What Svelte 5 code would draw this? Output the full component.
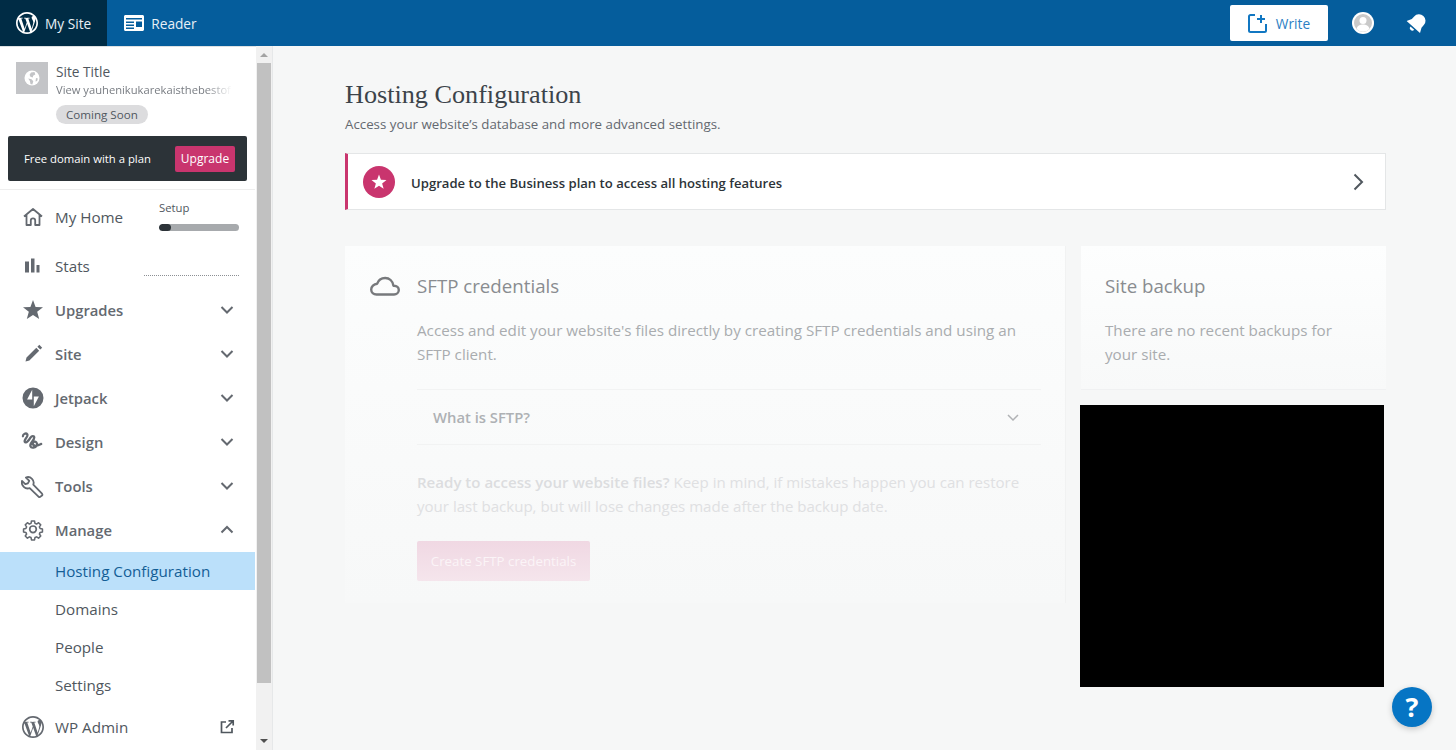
<script>
	const wp =
		'M12 2C6.477 2 2 6.477 2 12s4.477 10 10 10 10-4.477 10-10S17.523 2 12 2zM3.5 12c0-1.232.264-2.402.736-3.459L8.291 19.65C5.455 18.272 3.5 15.365 3.5 12zm8.5 8.501c-.834 0-1.64-.122-2.401-.346l2.55-7.41 2.613 7.158c.017.042.038.081.061.117-.884.31-1.833.481-2.823.481zm1.172-12.486c.512-.027.973-.081.973-.081.458-.054.404-.727-.054-.701 0 0-1.377.108-2.266.108-.835 0-2.239-.108-2.239-.108-.459-.026-.512.674-.054.701 0 0 .434.054.892.081l1.324 3.629-1.86 5.579-3.096-9.208c.512-.027.973-.081.973-.081.458-.054.403-.727-.055-.701 0 0-1.376.108-2.265.108-.16 0-.347-.004-.547-.01C6.418 4.977 9.032 3.5 12 3.5c2.211 0 4.225.845 5.738 2.23-.036-.002-.072-.007-.11-.007-.834 0-1.426.727-1.426 1.508 0 .7.404 1.293.835 1.993.323.566.7 1.293.7 2.344 0 .727-.28 1.572-.647 2.748l-.848 2.833-3.07-9.134zm3.102 11.332l2.596-7.506c.485-1.213.647-2.182.647-3.045 0-.313-.021-.603-.057-.874.664 1.21 1.041 2.599 1.041 4.078 0 3.137-1.7 5.875-4.227 7.347z';
	const star = 'M12 2l2.582 6.953L22 9.257l-5.822 4.602L18.18 21 12 16.89 5.82 21l2.002-7.14L2 9.256l7.418-.304z';
	const pencil = 'M18.300 2.800l2.900 2.900-1.900 1.900-2.900-2.900zM15.300 5.800l2.900 2.900L8.400 18.500l-3.900 1.100 1-4z';
	const jetpack = 'M12 1.500a10.500 10.500 0 1 0 0 21 10.500 10.500 0 0 0 0-21zM11.200 13.600H6.100l5.100-9.900zm1.600 6.700v-9.900h5.100z';

	const upper = [
		{ label: 'Upgrades', fill: star },
		{ label: 'Site', fill: pencil },
		{ label: 'Jetpack', fill: jetpack },
		{ label: 'Design', box: '2.500 3 19 19', line: 'M4 8c0-2 2.500-3 3.500-1.500 1 1.800-3 4.200-2 6 .8 1.300 3-1 4.500-3.500 1-1.500 3-1.800 3 0 0 2.500-4 4.500-3 7 .7 1.700 4 1.200 5-1 .8-1.800-1-3.500-2.500-2.500-1.500 1-.5 3 1.500 3 1.500 0 3-.8 4.500-1.500' },
		{ label: 'Tools', line: 'M21 19.600l-8.700-8.900c.7-2 .3-4.300-1.300-5.900C9.300 3.100 6.900 2.700 4.900 3.500l3.400 3.400-1.400 2.400-2.600.9-3.300-3.300c-.7 2 .2 4.300 1.800 5.900 1.600 1.600 3.900 2 5.900 1.300l8.800 8.600c.5.5 1.300.5 1.800 0l1.700-1.100c.4-.5.5-1.300 0-1.800z' }
	];
	const sub = ['Hosting Configuration', 'Domains', 'People', 'Settings'];
</script>

<div class="page">
	<header class="masthead">
		<a class="tab active">
			<svg width="24" height="24" viewBox="0 0 24 24"><path d={wp} fill="#fff" transform="translate(-1.200 -1.200) scale(1.100)" /></svg>
			<span>My Site</span>
		</a>
		<a class="tab">
			<svg width="24" height="24" viewBox="0 0 24 24">
				<path fill="#fff" fill-rule="evenodd" d="M3.500 4h17c.8 0 1.500.7 1.500 1.500v13c0 .8-.7 1.500-1.500 1.500h-17c-.8 0-1.500-.7-1.500-1.500v-13C2 4.700 2.700 4 3.500 4zM4 7v1.500h16V7zm0 3.500V12h8v-1.500zm0 3V15h8v-1.500zm0 3V18h8v-1.500zm10-6V16h6v-5.500z" />
			</svg>
			<span>Reader</span>
		</a>
		<div class="spacer"></div>
		<button class="write">
			<svg width="24" height="24" viewBox="0 0 24 24" fill="none" stroke="#1177c2" stroke-width="2">
				<g transform="translate(-3 0)">
					<path d="M10 4H5.500A1.500 1.500 0 0 0 4 5.500v14A1.500 1.500 0 0 0 5.500 21h14a1.500 1.500 0 0 0 1.500-1.500V13" />
					<path d="M16 4v8M12 8h8" />
				</g>
			</svg>
			Write
		</button>
		<span class="avatar">
			<svg width="22" height="22" viewBox="0 0 22 22">
				<circle cx="11" cy="11" r="11" fill="#fff" />
				<circle cx="11" cy="11" r="9" fill="#c9c9c9" />
				<circle cx="11" cy="8.500" r="3.500" fill="#fff" />
				<path d="M4.500 17c1-3.500 3.500-4.500 6.500-4.500s5.500 1 6.500 4.500a9 9 0 0 1-13 0z" fill="#fff" />
			</svg>
		</span>
		<span class="bell">
			<svg width="24" height="24" viewBox="0 0 24 24">
				<g fill="#fff" transform="rotate(42 12 12)">
					<path d="M12 2.500a6.500 6.500 0 0 0-6.500 6.500v3.500L3 17.500h18l-2.500-5V9A6.500 6.500 0 0 0 12 2.500z" />
					<path d="M9.500 19a2.500 2.500 0 0 0 5 0z" />
				</g>
			</svg>
		</span>
	</header>

	<div class="body">
		<aside class="sidebar">
			<nav>
				<div class="site">
					<span class="site-icon">
						<svg width="20" height="20" viewBox="0 0 20 20">
							<circle cx="10" cy="10" r="7.500" fill="#fff" />
							<path fill="#c3c4c7" d="M9 4.500l3.500-.6.800 2.500-2.200 1.300-.3 1.800-2.400-.8-.8-2zM6.200 10.500l3.300.7 1.800 2-1 3.300-1.800-.5-.6-3zM14 10l1.900.4-.8 2.600-1.600.6z" />
						</svg>
					</span>
					<div class="site-text">
						<div class="site-title">Site Title</div>
						<div class="site-url">View yauhenikukarekaisthebestof</div>
						<span class="pill">Coming Soon</span>
					</div>
				</div>
				<div class="promo">
					<span>Free domain with a plan</span>
					<span class="promo-btn">Upgrade</span>
				</div>

				<div class="home">
					<span class="row-label">
						<svg width="24" height="24" viewBox="0 0 24 24" fill="none" stroke="#646970" stroke-width="1.800">
							<path d="M3 11.500L12 4l9 7.500M5.500 10v10h4.300v-4.500a2.200 2.200 0 0 1 4.400 0V20h4.300V10" stroke-linejoin="round" />
						</svg>
						My Home
					</span>
					<div class="setup">
						Setup
						<div class="track"><div class="bar" style="width: 15%"></div></div>
					</div>
				</div>

				<div class="row stats">
					<span class="row-label">
						<svg width="24" height="24" viewBox="0 0 24 24" fill="#646970">
							<rect x="4" y="7.500" width="4" height="11" />
							<rect x="10" y="4.500" width="3.500" height="14" />
							<rect x="15.500" y="11" width="3" height="7.500" />
						</svg>
						Stats
					</span>
					<div class="dots"></div>
				</div>

				{#each upper as item}
					<div class="row strong">
						<span class="row-label">
							<svg width="24" height="24" viewBox={item.box ?? '0 0 24 24'}>
								{#if item.fill}
									<path d={item.fill} fill="#646970" fill-rule="evenodd" />
								{:else}
									<path d={item.line} fill="none" stroke="#646970" stroke-width="1.800" stroke-linecap="round" stroke-linejoin="round" />
								{/if}
							</svg>
							{item.label}
						</span>
						<svg class="chev" width="16" height="16" viewBox="0 0 16 16" fill="none" stroke="#646970" stroke-width="2"><path d="M2.500 5L8 10.500 13.500 5" /></svg>
					</div>
				{/each}

				<div class="row strong">
					<span class="row-label">
						<svg width="24" height="24" viewBox="0 0 24 24" fill="none" stroke="#646970" stroke-width="1.700" stroke-linejoin="round">
							<path d="M10.300 2.800h3.400l.5 2.600 1.800.8 2.200-1.500 2.400 2.400-1.500 2.200.8 1.800 2.600.5v3.400l-2.600.5-.8 1.800 1.500 2.200-2.400 2.400-2.200-1.500-1.800.8-.5 2.600h-3.400l-.5-2.600-1.800-.8-2.200 1.500-2.400-2.400 1.500-2.200-.8-1.800-2.600-.5v-3.400l2.600-.5.8-1.800L3.400 7.100l2.400-2.400L8 6.200l1.800-.8z" transform="translate(12 12) scale(.9) translate(-12 -12.800)" />
							<circle cx="12" cy="11.300" r="3.300" />
						</svg>
						Manage
					</span>
					<svg class="chev" width="16" height="16" viewBox="0 0 16 16" fill="none" stroke="#646970" stroke-width="2"><path d="M2.500 10.500L8 5l5.500 5.500" /></svg>
				</div>

				<ul class="sub">
					{#each sub as name, i}
						<li class:selected={i === 0}>{name}</li>
					{/each}
				</ul>

				<div class="row">
					<span class="row-label">
						<svg width="24" height="24" viewBox="0 0 24 24"><path d={wp} fill="#646970" transform="translate(-1.200 -1.200) scale(1.100)" /></svg>
						WP Admin
					</span>
					<svg class="chev" width="16" height="16" viewBox="0 0 16 16" fill="none" stroke="#50575e" stroke-width="1.700">
						<path d="M7 3H2.500v10.500H13V9" />
						<path d="M7 9l7-7M9.500 1.800h4.700v4.700" />
					</svg>
				</div>
			</nav>

			<div class="scrollbar">
				<span class="arrow up"></span>
				<div class="thumb"></div>
				<span class="arrow down"></span>
			</div>
		</aside>

		<main>
			<h1>Hosting Configuration</h1>
			<p class="sub-head">Access your website’s database and more advanced settings.</p>

			<div class="nudge">
				<span class="nudge-icon">
					<svg width="18" height="18" viewBox="0 0 24 24"><path d={star} fill="#fff" /></svg>
				</span>
				<span class="nudge-text">Upgrade to the Business plan to access all hosting features</span>
				<svg width="24" height="24" viewBox="0 0 24 24" fill="none" stroke="#50575e" stroke-width="2"><path d="M8.500 4.500L16 12l-7.500 7.500" /></svg>
			</div>

			<div class="columns">
				<section class="card sftp">
					<svg class="cloud" width="32" height="32" viewBox="0 0 32 32" fill="none" stroke="#77797c" stroke-width="2.400">
						<path d="M7.500 24.500h17.500c2.700 0 4.800-2 4.800-4.400s-2.100-4.400-4.800-4.400h-.6C23.800 11 20.300 8 16.200 8c-3.700 0-6.900 2.300-8 5.700-3.400.3-6 3-6 5.800 0 2.800 2.300 5 5.300 5z" stroke-linejoin="round" />
					</svg>
					<div class="sftp-body">
						<h2>SFTP credentials</h2>
						<p class="intro">Access and edit your website's files directly by creating SFTP credentials and using an SFTP client.</p>
						<div class="accordion">
							<span>What is SFTP?</span>
							<svg width="16" height="16" viewBox="0 0 16 16" fill="none" stroke="#b0b2b5" stroke-width="1.500"><path d="M3 6l5 5 5-5" /></svg>
						</div>
						<p class="warn"><strong>Ready to access your website files?</strong> Keep in mind, if mistakes happen you can restore your last backup, but will lose changes made after the backup date.</p>
						<button class="create">Create SFTP credentials</button>
					</div>
				</section>

				<div class="side-col">
					<section class="card backup">
						<h2>Site backup</h2>
						<p class="intro">There are no recent backups for your site.</p>
					</section>
					<div class="blackout"></div>
				</div>
			</div>
		</main>
	</div>

	<button class="help">?</button>
</div>

<style>
	:global(body) {
		margin: 0;
		background: #f6f7f7;
	}

	.page {
		height: 750px;
		overflow: hidden;
		display: flex;
		flex-direction: column;
		font-family: "Open Sans", "Noto Sans", sans-serif;
		color: #50575e;
	}

	.masthead {
		flex: none;
		height: 46px;
		display: flex;
		align-items: center;
		background: #055d9c;
		color: #fff;
		font-size: 13.700px;
	}

	.tab {
		height: 46px;
		display: flex;
		align-items: center;
		gap: 5px;
		padding: 0 15px;
		color: #e8f0f6;
	}

	.tab span {
		padding-top: 1px;
	}

	.tab.active {
		background: #002c45;
		gap: 6px;
		padding-right: 16px;
	}

	.spacer {
		flex: 1;
	}

	.write {
		width: 98px;
		height: 36px;
		display: flex;
		align-items: center;
		justify-content: center;
		gap: 4px;
		border: 0;
		border-radius: 2px;
		background: #fff;
		color: #2c7fc4;
		font: inherit;
		padding: 0;
	}

	.avatar {
		display: flex;
		margin-left: 24px;
	}

	.bell {
		display: flex;
		margin: 0 27px 0 31px;
	}

	.body {
		flex: 1;
		min-height: 0;
		display: flex;
	}

	.sidebar {
		flex: none;
		width: 272px;
		display: flex;
		background: #fff;
		border-right: 1px solid #e6e8e9;
		box-shadow: inset 0 1px 0 #dde1e3;
	}

	nav {
		width: 255px;
		flex: none;
		font-size: 15.200px;
		color: #50575e;
	}

	.site {
		display: flex;
		gap: 8px;
		padding: 16px 16px 0;
		height: 75px;
		box-sizing: border-box;
	}

	.site-icon {
		flex: none;
		width: 32px;
		height: 32px;
		display: flex;
		align-items: center;
		justify-content: center;
		background: #c3c4c7;
	}

	.site-title {
		font-size: 13.700px;
		line-height: 18px;
		margin-top: 1px;
	}

	.site-url {
		width: 176px;
		overflow: hidden;
		white-space: nowrap;
		font-size: 11.200px;
		line-height: 18px;
		color: #787c82;
		-webkit-mask-image: linear-gradient(90deg, #000 85%, transparent);
		mask-image: linear-gradient(90deg, #000 85%, transparent);
	}

	.pill {
		display: inline-block;
		margin-top: 6px;
		padding: 0 10px;
		border-radius: 10px;
		background: #dcdcde;
		font-size: 11.600px;
		line-height: 19px;
	}

	.promo {
		margin: 15px 8px 8px;
		height: 45px;
		display: flex;
		align-items: center;
		justify-content: space-between;
		padding: 0 12px 0 16px;
		border-radius: 2px;
		background: #2c3338;
		color: #fff;
		font-size: 11.300px;
	}

	.promo-btn {
		width: 60px;
		height: 26px;
		display: flex;
		align-items: center;
		justify-content: center;
		border-radius: 2px;
		background: #c9356e;
		font-size: 12px;
	}

	.home {
		height: 55px;
		display: flex;
		align-items: center;
		justify-content: space-between;
		padding: 0 16px 0 21px;
		border-top: 1px solid #eee;
		box-sizing: border-box;
	}

	.row-label {
		display: flex;
		align-items: center;
		gap: 10px;
	}

	.setup {
		width: 80px;
		margin-bottom: 4px;
		font-size: 11.300px;
		line-height: 16px;
		color: #50575e;
	}

	.track {
		height: 7px;
		margin-top: 8px;
		border-radius: 4px;
		background: #a7aaad;
		overflow: hidden;
	}

	.bar {
		height: 100%;
		border-radius: 4px;
		background: #2c3338;
	}

	.row {
		position: relative;
		height: 44px;
		display: flex;
		align-items: center;
		justify-content: space-between;
		padding: 0 20px 0 21px;
	}

	.strong {
		font-size: 14.800px;
		font-weight: 600;
		color: #646970;
	}

	.dots {
		position: absolute;
		left: 144px;
		right: 16px;
		top: 31px;
		border-bottom: 1px dotted #8c8f94;
	}

	.sub {
		list-style: none;
		margin: 0;
		padding: 0;
	}

	.sub li {
		height: 38px;
		display: flex;
		align-items: center;
		box-sizing: border-box;
		padding: 0 0 1px 55px;
	}

	.sub li.selected {
		background: #bbe0fa;
		color: #135e96;
	}

	.sub + .row {
		margin-top: 1px;
	}

	.scrollbar {
		flex: 1;
		margin-left: 1px;
		display: flex;
		flex-direction: column;
		align-items: center;
		background: #f1f1f1;
	}

	.thumb {
		flex: none;
		height: 620px;
		width: 14px;
		background: #c1c1c1;
	}

	.arrow {
		flex: none;
		width: 0;
		height: 0;
		border-left: 4px solid transparent;
		border-right: 4px solid transparent;
	}

	.arrow.up {
		margin: 7px 0 6px;
		border-bottom: 4px solid #a3a3a3;
	}

	.arrow.down {
		margin: auto 0 7px;
		border-top: 4px solid #505050;
	}

	main {
		flex: 1;
		min-width: 0;
		padding: 0 70px 0 72px;
	}

	h1 {
		margin: 33px 0 0;
		font-family: "Liberation Serif", serif;
		font-weight: 400;
		font-size: 26.200px;
		line-height: 32px;
		color: #3c434a;
	}

	.sub-head {
		margin: 2px 0 0;
		font-size: 13.300px;
		line-height: 22px;
		color: #646970;
	}

	.nudge {
		height: 57px;
		margin-top: 18px;
		display: flex;
		align-items: center;
		gap: 16px;
		padding: 0 15px;
		box-sizing: border-box;
		border: 1px solid #e4e6e7;
		border-left: 3px solid #c9356e;
		background: #fff;
		color: #2c3338;
		font-size: 13.100px;
		font-weight: 600;
	}

	.nudge-icon {
		width: 32px;
		height: 32px;
		display: flex;
		align-items: center;
		justify-content: center;
		border-radius: 50%;
		background: #c9356e;
	}

	.nudge-text {
		flex: 1;
		padding-top: 2px;
	}

	.columns {
		display: flex;
		align-items: flex-start;
		gap: 16px;
		margin-top: 36px;
	}

	.card {
		box-sizing: border-box;
		background: linear-gradient(#fdfefe, #f8f9f9);
		box-shadow: 0 1px 0 #f0f1f2;
	}

	.sftp {
		flex: none;
		width: 720px;
		height: 357px;
		display: flex;
		gap: 16px;
		padding: 24px;
		background: linear-gradient(#fcfdfd, #f7f8f8);
		box-shadow: 1px 0 0 #f1f2f2;
	}

	.cloud {
		flex: none;
	}

	.sftp-body {
		flex: 1;
	}

	h2 {
		margin: 0;
		font-weight: 400;
		font-size: 18.700px;
		line-height: 32px;
		color: #898c90;
	}

	.intro {
		margin: 16px 0 0;
		font-size: 15.200px;
		line-height: 24px;
		color: #a9acaf;
	}

	.accordion {
		height: 56px;
		display: flex;
		align-items: center;
		justify-content: space-between;
		margin-top: 23px;
		padding: 0 20px 0 16px;
		box-sizing: border-box;
		border-top: 1px solid #f2f3f3;
		border-bottom: 1px solid #f2f3f3;
		font-size: 14.800px;
		font-weight: 600;
		color: #aeb1b4;
	}

	.warn {
		margin: 25px 0 0;
		font-size: 15.050px;
		line-height: 24px;
		color: #dfe0e2;
	}

	.warn strong {
		font-weight: 600;
		color: #dcdddf;
	}

	.create {
		display: block;
		width: 173px;
		height: 40px;
		margin-top: 23px;
		padding: 0;
		border: 0;
		border-radius: 2px;
		background: linear-gradient(#f0d8e3, #f5e5ec);
		color: #fbf4f7;
		font: inherit;
		font-size: 13.300px;
	}

	.side-col {
		flex: 1;
		min-width: 0;
	}

	.backup {
		height: 143px;
		padding: 24px;
	}

	.blackout {
		width: 304px;
		height: 282px;
		margin: 16px 0 0 -1px;
		background: #000;
	}

	.help {
		position: absolute;
		left: 1392px;
		top: 687px;
		width: 40px;
		height: 40px;
		padding: 0;
		border: 0;
		border-radius: 50%;
		background: #0675c4;
		box-shadow: 0 2px 6px rgba(0, 0, 0, 0.2);
		color: #fff;
		font-family: "Open Sans", sans-serif;
		font-size: 27px;
		font-weight: 700;
		line-height: 40px;
	}
</style>
